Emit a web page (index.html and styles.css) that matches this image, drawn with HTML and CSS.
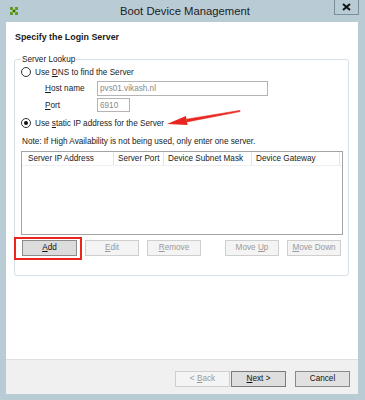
FILE: index.html
```html
<!DOCTYPE html>
<html lang="en">
<head>
  <meta charset="UTF-8" />
  <title>Boot Device Management</title>
  <link rel="stylesheet" href="styles.css">
</head>
<body>
  <div class="window">

    <div class="titlebar">
      <svg class="app-icon" width="8" height="8" viewBox="0 0 8 8">
        <rect x="0" y="0" width="3" height="3" fill="#5c9a2a"/>
        <rect x="5" y="0" width="3" height="3" fill="#5c9a2a"/>
        <rect x="0" y="5" width="3" height="3" fill="#5c9a2a"/>
        <rect x="5" y="5" width="3" height="3" fill="#5c9a2a"/>
        <rect x="2" y="2" width="4" height="4" fill="#7fb93c"/>
        <rect x="3" y="3" width="2" height="2" fill="#3d6b1a"/>
      </svg>
      <div class="title">Boot Device Management</div>
      <div class="close-btn">
        <svg width="9" height="8" viewBox="0 0 9 8">
          <path d="M1 1 L8 7 M8 1 L1 7" stroke="#111" stroke-width="2"/>
        </svg>
      </div>
    </div>

    <div class="client">
      <div class="page">
        <div class="heading">Specify the Login Server</div>

        <fieldset class="group">
          <legend>Server Lookup</legend>

          <div class="radio-row first">
            <span class="radio"></span>
            <span>Use <u>D</u>NS to find the Server</span>
          </div>

          <div class="field-row host">
            <span class="field-label"><u>H</u>ost name</span>
            <span class="textbox wide">pvs01.vikash.nl</span>
          </div>

          <div class="field-row port">
            <span class="field-label"><u>P</u>ort</span>
            <span class="textbox narrow">6910</span>
          </div>

          <div class="radio-row second">
            <span class="radio checked"></span>
            <span>Use <u>s</u>tatic IP address for the Server</span>
          </div>

          <div class="note">Note: If High Availability is not being used, only enter one server.</div>

          <div class="listview">
            <div class="list-header">
              <div class="col c1">Server IP Address</div>
              <div class="col c2">Server Port</div>
              <div class="col c3">Device Subnet Mask</div>
              <div class="col c4">Device Gateway</div>
            </div>
          </div>

          <div class="list-buttons">
            <div class="marked">
              <button class="btn"><u>A</u>dd</button>
            </div>
            <button class="btn disabled"><u>E</u>dit</button>
            <button class="btn disabled"><u>R</u>emove</button>
            <button class="btn disabled push"><span>Move <u>U</u>p</span></button>
            <button class="btn disabled"><span><u>M</u>ove Down</span></button>
          </div>
        </fieldset>

        <svg class="arrow" width="80" height="30" viewBox="0 0 80 30">
          <path d="M79 10.4 L79 11.6 L25.9 21.9 L25.5 19.2 Z" fill="#e8261f" stroke="#e8261f" stroke-width="0.6" stroke-linejoin="round"/>
          <path d="M6 24 L24.9 16 L26.6 25 Z" fill="#e8261f"/>
        </svg>
      </div>

      <div class="footer">
        <button class="btn disabled">&lt; <u>B</u>ack</button>
        <button class="btn default"><u>N</u>ext &gt;</button>
        <button class="btn cancel">Cancel</button>
      </div>
    </div>

  </div>
</body>
</html>
```

FILE: styles.css
```css
html, body {
  margin: 0;
  padding: 0;
}

body {
  font-family: "Liberation Sans", Arial, sans-serif;
  font-size: 8.2px;
  color: #1a1a1a;
}

.window {
  width: 365px;
  height: 400px;
  background-color: #b9ccd6;
  display: flex;
  flex-direction: column;
}

.titlebar {
  height: 22px;
  display: grid;
  grid-template-columns: 1fr auto 1fr;
  align-items: start;
  padding: 0 6px 0 10px;
}

.app-icon {
  margin-top: 7px;
}

.title {
  font-size: 11.3px;
  line-height: 22px;
  color: #222;
  padding-left: 1px;
}

.close-btn {
  justify-self: end;
  width: 23px;
  height: 14px;
  border: 1px solid #78909c;
  border-top: none;
  display: flex;
  align-items: center;
  justify-content: center;
}

.client {
  flex: 1;
  margin: 0 7px 6px 6px;
  background: #fff;
  display: flex;
  flex-direction: column;
}

.page {
  flex: 1;
  padding: 10px 9px 0 8px;
  position: relative;
}

.heading {
  font-weight: bold;
  font-size: 8.9px;
  line-height: 11px;
  padding-left: 1px;
}

.group {
  margin: 11px 0 0 0;
  padding: 0 5px 19px 6px;
  border: 1px solid #d6e0e6;
  border-radius: 3px;
}

.group legend {
  padding: 0 1px;
  line-height: 11px;
}

.radio-row {
  display: flex;
  align-items: center;
  height: 14px;
}

.radio-row.second {
  margin-top: 4px;
}

.radio {
  width: 8px;
  height: 8px;
  border: 1px solid #333;
  border-radius: 50%;
  margin-right: 4px;
  display: flex;
  align-items: center;
  justify-content: center;
  background: #fff;
}

.radio.checked::after {
  content: "";
  width: 4px;
  height: 4px;
  border-radius: 50%;
  background: #111;
}

.field-row {
  display: flex;
  align-items: center;
  margin-top: 2px;
  padding-left: 24px;
}

.field-row.host {
  height: 15px;
}

.field-row.port {
  height: 14px;
}

.field-label {
  width: 52px;
}

.textbox {
  height: 100%;
  box-sizing: border-box;
  border: 1px solid #b4b4b4;
  color: #8a8a8a;
  display: flex;
  align-items: center;
  padding-left: 2px;
}

.textbox.wide {
  width: 171px;
}

.textbox.narrow {
  width: 33px;
}

.note {
  margin-top: 6px;
  line-height: 12px;
  padding-left: 1px;
}

.listview {
  margin-top: 3px;
  height: 84px;
  box-sizing: border-box;
  border: 1px solid #a3a3a3;
}

.list-header {
  display: flex;
  height: 13px;
  border-bottom: 1px solid #f0f0f0;
}

.col {
  box-sizing: border-box;
  border-right: 1px solid #e3e3e3;
  padding-left: 6px;
  line-height: 13px;
  white-space: nowrap;
}

.c1 { width: 92px; }
.c2 { width: 50px; padding-left: 4px; }
.c3 { width: 88px; padding-left: 4px; }
.c4 { width: 88px; padding-left: 4px; }

.list-buttons {
  display: flex;
  margin-top: 5px;
  padding-left: 1px;
}

.btn {
  font-family: inherit;
  font-size: inherit;
  color: #111;
  width: 54px;
  height: 16px;
  padding: 0;
  margin: 0;
  box-sizing: border-box;
  border: 1px solid #adadad;
  background: #e1e1e1;
  line-height: 14px;
  white-space: nowrap;
}

.btn.disabled {
  color: #9a9a9a;
  border-color: #cfcfcf;
  background: #f4f4f4;
}

.list-buttons .btn {
  margin-left: 8px;
}

.list-buttons .btn.push {
  margin-left: 24px;
}

.marked {
  position: relative;
}

.marked .btn {
  margin-left: 0;
  width: 55px;
  border-color: #8c8c8c;
  background: #dcdcdc;
}

.marked::after {
  content: "";
  position: absolute;
  left: -8px;
  top: -3px;
  right: -5px;
  bottom: -4px;
  border: 2px solid #e8261f;
}

.arrow {
  position: absolute;
  left: 155px;
  top: 78px;
}

.footer {
  height: 35px;
  box-sizing: border-box;
  background: #f0f0f0;
  border-top: 1px solid #dfdfdf;
  display: flex;
  justify-content: flex-end;
  align-items: flex-start;
  padding: 11px 8px 0 0;
}

.footer .btn {
  width: 55px;
  height: 16px;
}

.footer .btn.default {
  margin-left: 1px;
  border-color: #7a7a7a;
  background: #dedede;
}

.footer .btn.cancel {
  margin-left: 9px;
  border-color: #8a8a8a;
}
```
